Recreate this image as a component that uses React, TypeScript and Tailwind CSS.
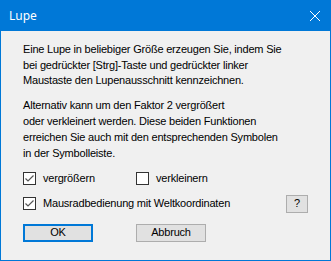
import React from 'react';

const CheckBox = ({ checked }: { checked: boolean }) => (
    <span className="w-[13px] h-[13px] border border-[#333333] bg-white flex items-center justify-center shrink-0">
        {checked && (
            <svg width="11" height="11" viewBox="0 0 11 11">
                <path d="M1.5 5.5 L4 8 L9.5 2.5" fill="none" stroke="#555555" strokeWidth="1.2" />
            </svg>
        )}
    </span>
);

export default function App() {
    return (
        <div className="w-[331px] h-[261px] border border-[#0078d7] bg-[#f0f0f0] flex flex-col text-[11px] tracking-[-0.2px] text-black" style={{ fontFamily: '"Liberation Sans", Arial, sans-serif' }}>
            <div className="h-[30px] bg-[#0078d7] flex items-center justify-between pl-[8px] pr-[10px] shrink-0">
                <span className="text-white text-[12px] tracking-normal" style={{ fontFamily: '"Noto Sans", "Open Sans", sans-serif' }}>Lupe</span>
                <svg width="10" height="10" viewBox="0 0 10 10">
                    <path d="M0 0 L10 10 M10 0 L0 10" stroke="white" strokeWidth="1" />
                </svg>
            </div>
            <div className="flex flex-col pl-[22px] pr-[22px] pt-[11px]">
                <p className="leading-[15.5px] whitespace-nowrap">
                    Eine Lupe in beliebiger Größe erzeugen Sie, indem Sie<br />
                    bei gedrückter [Strg]-Taste und gedrückter linker<br />
                    Maustaste den Lupenausschnitt kennzeichnen.
                </p>
                <p className="leading-[16px] whitespace-nowrap mt-[8px]">
                    Alternativ kann um den Faktor 2 vergrößert<br />
                    oder verkleinert werden. Diese beiden Funktionen<br />
                    erreichen Sie auch mit den entsprechenden Symbolen<br />
                    in der Symbolleiste.
                </p>
                <div className="flex items-center h-[13px] mt-[11px]">
                    <div className="flex items-center gap-[7px] w-[113px]">
                        <CheckBox checked />
                        <span>vergrößern</span>
                    </div>
                    <div className="flex items-center gap-[7px]">
                        <CheckBox checked={false} />
                        <span>verkleinern</span>
                    </div>
                </div>
                <div className="flex items-center justify-between h-[18px] mt-[10px]">
                    <div className="flex items-center gap-[7px]">
                        <CheckBox checked />
                        <span>Mausradbedienung mit Weltkoordinaten</span>
                    </div>
                    <button className="w-[22px] h-[18px] border border-[#adadad] bg-[#e1e1e1] flex items-center justify-center text-[11px]">?</button>
                </div>
                <div className="flex items-center gap-[43px] mt-[11px]">
                    <button className="w-[70px] h-[18px] border-2 border-[#0078d7] bg-[#e1e1e1] flex items-center justify-center">OK</button>
                    <button className="w-[70px] h-[18px] border border-[#adadad] bg-[#e1e1e1] flex items-center justify-center">Abbruch</button>
                </div>
            </div>
        </div>
    );
}
